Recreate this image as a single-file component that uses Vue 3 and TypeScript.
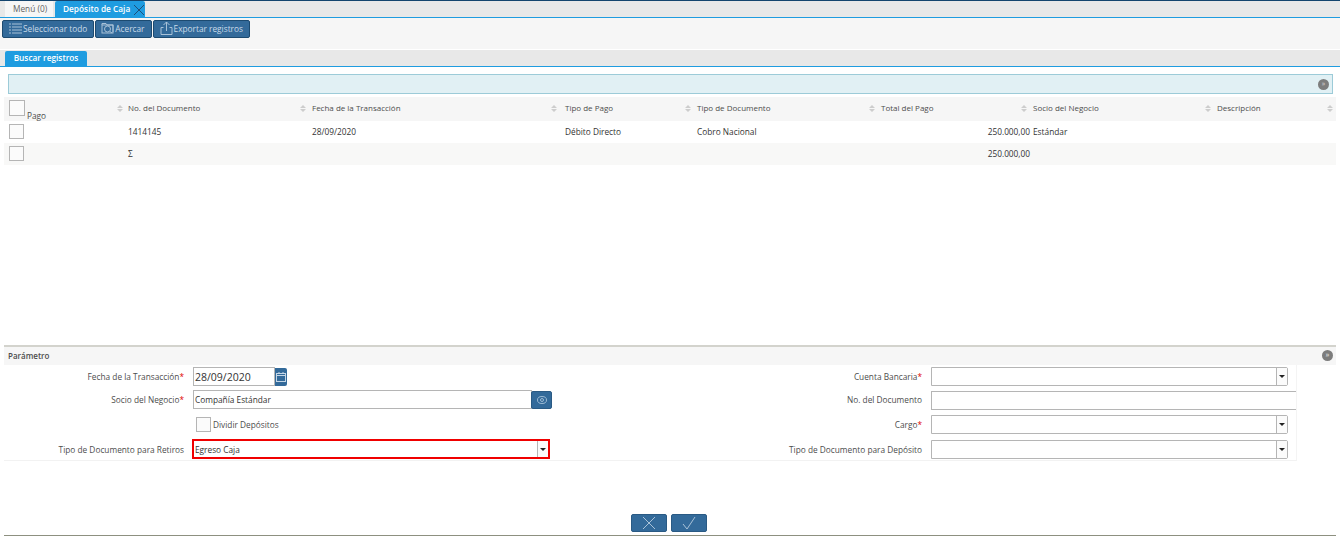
<template>
  <div class="window">
    <div class="main-tabs">
      <div class="main-tab">Menú (0)</div>
      <div class="main-tab main-tab--active">
        Depósito de Caja
        <svg class="tab-close" viewBox="0 0 12 12" width="12" height="12">
          <path d="M1 1l10 10M11 1L1 11" stroke="#1d4f7a" stroke-width="1" fill="none" />
        </svg>
      </div>
    </div>

    <div class="toolbar">
      <button class="tool-btn">
        <svg viewBox="0 0 13 11" width="13" height="11" fill="none" stroke="#a9c2d8" stroke-width="1">
          <path d="M0 1h2M3 1h10M0 4h2M3 4h10M0 7h2M3 7h10M0 10h2M3 10h10" />
        </svg>
        Seleccionar todo
      </button>
      <button class="tool-btn">
        <svg viewBox="0 0 13 12" width="13" height="12" fill="none" stroke="#a9c2d8" stroke-width="1">
          <path d="M1 3V1.500h4l1 1.500h6v7" />
          <rect x="1" y="3" width="11" height="8" />
          <circle cx="6.500" cy="7" r="3" />
          <path d="M9 9.500l2 1.500" />
        </svg>
        Acercar
      </button>
      <button class="tool-btn">
        <svg viewBox="0 0 13 14" width="13" height="14" fill="none" stroke="#a9c2d8" stroke-width="1">
          <path d="M3.500 6.500H1v7h11v-7H9.500" />
          <path d="M6.500 10V1M3.500 4l3-3 3 3" />
        </svg>
        Exportar registros
      </button>
    </div>

    <div class="sub-tabs">
      <div class="sub-tab">Buscar registros</div>
    </div>

    <div class="message-bar">
      <span class="collapse-dot">»</span>
    </div>

    <div class="grid">
      <div class="grid-row grid-row--head">
        <div class="cell cell--pago">
          <span class="check check--head"></span>
          <span class="pago-label">Pago</span>
          <svg class="sort" viewBox="0 0 6 7" width="6" height="7"><path d="M3 0l3 3H0zM3 7L0 4h6z" /></svg>
        </div>
        <div v-for="col in columns" :key="col" class="cell">
          {{ col }}
          <svg class="sort" viewBox="0 0 6 7" width="6" height="7"><path d="M3 0l3 3H0zM3 7L0 4h6z" /></svg>
        </div>
      </div>
      <div v-for="(row, i) in rows" :key="i" class="grid-row" :class="{ 'grid-row--alt': i === 1 }">
        <div class="cell cell--pago"><span class="check"></span></div>
        <div
          v-for="(value, j) in row"
          :key="j"
          class="cell"
          :class="{ 'cell--num': j === 4 }"
        >{{ value }}</div>
      </div>
    </div>

    <div class="spacer"></div>

    <div class="panel-head">
      Parámetro
      <span class="collapse-dot">»</span>
    </div>

    <div class="form">
      <label class="form-label">Fecha de la Transacción<em>*</em></label>
      <div class="form-field form-field--date">
        <input class="input input--date" value="28/09/2020" />
        <button class="date-btn">
          <svg viewBox="0 0 10 10" width="10" height="10" fill="none" stroke="#c4d6e6" stroke-width="1">
            <rect x="0.500" y="1.500" width="9" height="8" />
            <path d="M0.500 3.500h9M3 0v2M7 0v2" />
          </svg>
        </button>
      </div>
      <label class="form-label form-label--right">Cuenta Bancaria<em>*</em></label>
      <div class="form-field form-field--right">
        <div class="combo"><span class="combo-text"></span><span class="combo-arrow"></span></div>
      </div>

      <label class="form-label">Socio del Negocio<em>*</em></label>
      <div class="form-field form-field--search">
        <input class="input input--small" value="Compañía Estándar" />
        <button class="search-btn">
          <svg viewBox="0 0 10 8" width="10" height="8" fill="none" stroke="#9dbbd4" stroke-width="1">
            <ellipse cx="5" cy="4" rx="4.500" ry="3.500" />
            <circle cx="5" cy="4" r="1.500" />
          </svg>
        </button>
      </div>
      <label class="form-label form-label--right">No. del Documento</label>
      <div class="form-field form-field--doc">
        <input class="input input--plain" />
      </div>

      <div></div>
      <div class="form-field form-field--check">
        <span class="check"></span>
        Dividir Depósitos
      </div>
      <label class="form-label form-label--right">Cargo<em>*</em></label>
      <div class="form-field form-field--right">
        <div class="combo"><span class="combo-text"></span><span class="combo-arrow"></span></div>
      </div>

      <label class="form-label">Tipo de Documento para Retiros</label>
      <div class="form-field">
        <div class="combo combo--error"><span class="combo-text">Egreso Caja</span><span class="combo-arrow"></span></div>
      </div>
      <label class="form-label form-label--right">Tipo de Documento para Depósito</label>
      <div class="form-field form-field--right">
        <div class="combo"><span class="combo-text"></span><span class="combo-arrow"></span></div>
      </div>
    </div>

    <div class="actions">
      <button class="action-btn">
        <svg viewBox="0 0 14 14" width="14" height="14" fill="none" stroke="#a9c2d8" stroke-width="1">
          <path d="M1 1l12 12M13 1L1 13" />
        </svg>
      </button>
      <button class="action-btn">
        <svg viewBox="0 0 14 14" width="14" height="14" fill="none" stroke="#a9c2d8" stroke-width="1">
          <path d="M1 8l4 5L13 1" />
        </svg>
      </button>
    </div>
    <div class="bottom-line"></div>
  </div>
</template>

<script setup lang="ts">
const columns: string[] = [
  'No. del Documento',
  'Fecha de la Transacción',
  'Tipo de Pago',
  'Tipo de Documento',
  'Total del Pago',
  'Socio del Negocio',
  'Descripción'
]

const rows: string[][] = [
  ['1414145', '28/09/2020', 'Débito Directo', 'Cobro Nacional', '250.000,00', 'Estándar', ''],
  ['Σ', '', '', '', '250.000,00', '', '']
]
</script>

<style>
body {
  background: #ffffff;
}
</style>

<style scoped>
.window {
  width: 1340px;
  height: 536px;
  display: flex;
  flex-direction: column;
  box-sizing: border-box;
  overflow: hidden;
  border-top: 1px solid #14456e;
  font-family: "Open Sans", "Liberation Sans", sans-serif;
  font-size: 8.3px;
  color: #333333;
}

.main-tabs {
  height: 16px;
  display: flex;
  padding-left: 5px;
  gap: 2px;
  background: #e8e8e8;
  border-bottom: 1px solid #1f9ce0;
}

.main-tab {
  width: 48px;
  padding-left: 8px;
  box-sizing: border-box;
  line-height: 16px;
  background: #f6f6f6;
  color: #636363;
}

.main-tab--active {
  width: 90px;
  display: flex;
  align-items: center;
  justify-content: space-between;
  padding: 0 0 0 8px;
  background: #1f9ce0;
  color: #ffffff;
  font-weight: 600;
  border-radius: 2px 2px 0 0;
}

.tab-close {
  margin-top: 1px;
}

.toolbar {
  height: 32px;
  box-sizing: border-box;
  display: flex;
  align-items: flex-start;
  gap: 1px;
  padding: 2px 0 0 2px;
  background: #f6f6f6;
  border-bottom: 1px solid #ffffff;
}

.tool-btn {
  height: 18px;
  display: flex;
  align-items: center;
  gap: 1px;
  padding: 0 6px 2px 5px;
  border: 1px solid #1c4a70;
  border-radius: 2px;
  background: #336a9a;
  color: #c9dbe9;
  font: inherit;
}

.tool-btn:first-child {
  padding-left: 6px;
}

.tool-btn:last-child {
  padding-left: 6px;
}

.sub-tabs {
  height: 17px;
  box-sizing: border-box;
  padding: 1px 0 0 5px;
  background: #e8e8e8;
  border-bottom: 1px solid #1f9ce0;
}

.sub-tab {
  width: 82px;
  height: 15px;
  line-height: 14px;
  text-align: center;
  background: #1f9ce0;
  color: #ffffff;
  font-weight: 600;
  border-radius: 2px 2px 0 0;
}

.message-bar {
  height: 20px;
  margin: 7px 7px 0 8px;
  box-sizing: border-box;
  display: flex;
  align-items: center;
  justify-content: flex-end;
  padding-right: 3px;
  background: #e1f0f4;
  border: 1px solid #9ccbd8;
}

.collapse-dot {
  width: 11px;
  height: 11px;
  border-radius: 50%;
  background: #7d7d7d;
  color: #d8d8d8;
  font-size: 7px;
  line-height: 10px;
  text-align: center;
}

.grid {
  margin: 3px 4px 0;
}

.grid-row {
  display: grid;
  grid-template-columns: 120px 184px 253px 132px 184px 152px 184px 1fr;
  height: 22px;
  padding-bottom: 2px;
  box-sizing: border-box;
  align-items: center;
}

.grid-row--head {
  height: 24px;
  padding-bottom: 4px;
  background: #f6f6f6;
  color: #4d4d4d;
  font-size: 8px;
}

.grid-row--alt {
  background: #f8f8f7;
}

.cell {
  position: relative;
  height: 100%;
  display: flex;
  align-items: center;
  box-sizing: border-box;
  padding-left: 4px;
  min-width: 0;
  white-space: nowrap;
}

.cell--pago {
  padding-left: 5px;
}

.cell--num {
  justify-content: flex-end;
  padding: 0;
  margin-right: -1px;
}

.check {
  display: block;
  width: 15px;
  height: 15px;
  flex: none;
  box-sizing: border-box;
  background: #fbfbfb;
  border: 1px solid #b5b5b5;
}

.check--head {
  width: 16px;
  height: 16px;
  align-self: flex-start;
  margin-top: 3px;
}

.pago-label {
  align-self: flex-end;
  margin: 0 0 -4px 2px;
  font-size: 8.3px;
}

/* flechitas de orden de cada columna */
.sort {
  position: absolute;
  top: 8px;
  right: 2px;
  fill: #cdcdcd;
}

.cell--pago .sort {
  right: 1px;
}

.cell:nth-child(3) .sort {
  right: 4px;
}

.cell:last-child .sort {
  right: 3px;
}

.spacer {
  flex: 1;
}

.panel-head {
  height: 20px;
  margin: 0 4px;
  padding: 0 3px 2px 4px;
  box-sizing: border-box;
  display: flex;
  align-items: center;
  justify-content: space-between;
  background: #f6f6f6;
  border-top: 2px solid #d3d3cd;
  font-size: 8px;
  font-weight: 600;
  color: #4d4d4d;
}

.form {
  width: 1292px;
  margin: 0 0 0 4px;
  display: grid;
  grid-template-columns: 180px 366px 372px 1fr;
  grid-template-rows: 23px 23px 27px 22px;
  align-items: center;
  border-bottom: 1px solid #f2f2f2;
  border-right: 1px solid #f4f4f4;
  color: #4d4d4d;
}

.form-label {
  text-align: right;
  white-space: nowrap;
}

.form-label em {
  color: #e00000;
  font-style: normal;
}

.form-field {
  display: flex;
  align-items: center;
  padding-left: 9px;
}

.form-field--right {
  padding-right: 8px;
}

.form-field--doc {
  margin-top: 2px;
}

.form-field--check {
  gap: 2px;
  padding-left: 12px;
}

.input {
  height: 19px;
  box-sizing: border-box;
  border: 1px solid #b5b5b5;
  padding: 0 2px;
  font: inherit;
  color: #333333;
  background: #ffffff;
  outline: none;
}

.input--date {
  width: 82px;
  font-size: 10.5px;
  padding-left: 1px;
}

.input--small {
  width: 339px;
  flex: none;
  padding-left: 1px;
}

.input--plain {
  width: 100%;
  border-right: none;
}

.date-btn {
  width: 12px;
  height: 18px;
  padding: 0;
  display: flex;
  align-items: center;
  justify-content: center;
  border: none;
  border-radius: 0 2px 2px 0;
  background: #336a9a;
}

.search-btn {
  width: 21px;
  height: 18px;
  flex: none;
  margin-left: -1px;
  padding: 0;
  display: flex;
  align-items: center;
  justify-content: center;
  border: 1px solid #2a5a84;
  border-radius: 2px;
  background: #336a9a;
}

.combo {
  width: 100%;
  height: 19px;
  box-sizing: border-box;
  display: flex;
  border: 1px solid #b5b5b5;
  border-radius: 0 2px 2px 0;
  background: #ffffff;
}

.combo--error {
  width: 358px;
  margin-left: -1px;
  height: 20px;
  border: 2px solid #f00000;
  border-radius: 0;
}

.combo-text {
  flex: 1;
  line-height: 17px;
  padding-left: 2px;
  color: #333333;
}

.combo--error .combo-text {
  line-height: 17px;
  padding-left: 1px;
}

.combo-arrow {
  width: 10px;
  position: relative;
  background: #fbfbfb;
  border-left: 1px solid #b5b5b5;
}

/* triángulo del combo */
.combo-arrow::after {
  content: "";
  position: absolute;
  top: 7px;
  left: 2px;
  border: 3px solid transparent;
  border-top: 3px solid #222222;
  border-bottom: none;
}

.actions {
  display: flex;
  justify-content: center;
  gap: 4px;
  margin: 53px 2px 3px 0;
}

.action-btn {
  width: 36px;
  height: 18px;
  padding: 0;
  display: flex;
  align-items: center;
  justify-content: center;
  border: 1px solid #2a5a84;
  border-radius: 2px;
  background: #336a9a;
}

.bottom-line {
  height: 1px;
  margin: 0 4px;
  background: #8d9080;
}
</style>
